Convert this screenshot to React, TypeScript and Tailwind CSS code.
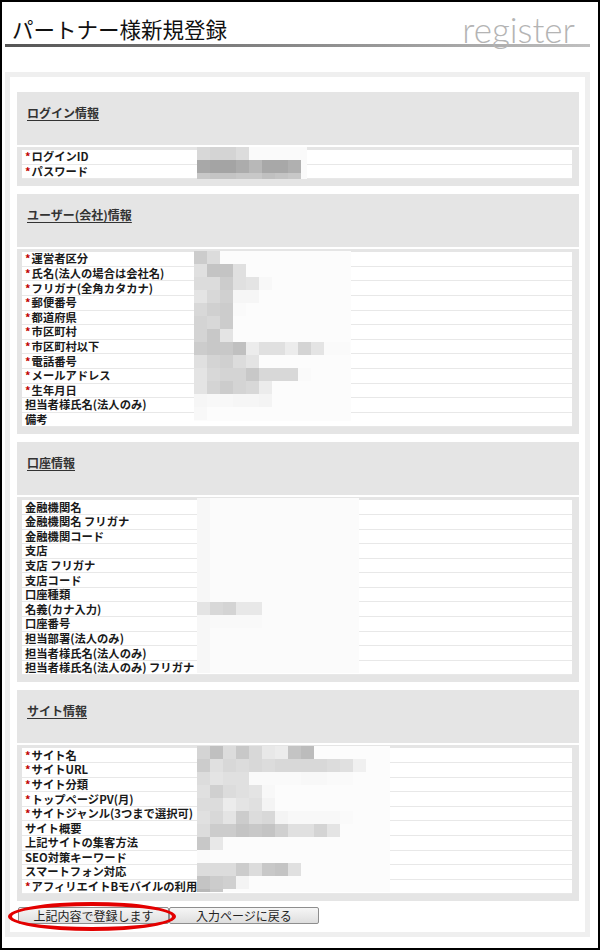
import React from 'react';

type Row = [string, boolean];

type Mosaic = {
  left: number;
  top: number;
  width: number;
  height: number;
  fill: string;
  rows: string[];
};

type Section = {
  title: string;
  rows: Row[];
  mosaic: Mosaic;
};

const sections: Section[] = [
  {
    title: 'ログイン情報',
    rows: [
      ['ログインID', true],
      ['パスワード', true],
    ],
    mosaic: {
      left: 180,
      top: 0,
      width: 110,
      height: 32,
      fill: 'fa',
      rows: ['d8 d4 d4 dc', 'a8 a4 a4 ac b8 a8 a8 b0', 'c8 c4 c4 c8 c8 c0 c4 c8'],
    },
  },
  {
    title: 'ユーザー(会社)情報',
    rows: [
      ['運営者区分', true],
      ['氏名(法人の場合は会社名)', true],
      ['フリガナ(全角カタカナ)', true],
      ['郵便番号', true],
      ['都道府県', true],
      ['市区町村', true],
      ['市区町村以下', true],
      ['電話番号', true],
      ['メールアドレス', true],
      ['生年月日', true],
      ['担当者様氏名(法人のみ)', false],
      ['備考', false],
    ],
    mosaic: {
      left: 177,
      top: 2,
      width: 157,
      height: 170,
      fill: 'fc',
      rows: [
        'cc dc',
        'e0 c4 c4 e0',
        'dc dc cc e0 e4 f8',
        'e4 d8 d0 f6 f6',
        'd8 d0 cc fa',
        'd4 d8 cc',
        'd4 c8 e4',
        'cc c8 c8 c0 ec e0 e0 ec d4 e4 fa fa',
        'e0 d4 d0 dc e4',
        'e4 d8 d4 d4 c8 d8 d8 d8 fa',
        'e4 d4 cc d4 d8 ec',
        'f6 f8 f8 f6 f6 f4',
        'f8',
      ],
    },
  },
  {
    title: '口座情報',
    rows: [
      ['金融機関名', false],
      ['金融機関名 フリガナ', false],
      ['金融機関コード', false],
      ['支店', false],
      ['支店 フリガナ', false],
      ['支店コード', false],
      ['口座種類', false],
      ['名義(カナ入力)', false],
      ['口座番号', false],
      ['担当部署(法人のみ)', false],
      ['担当者様氏名(法人のみ)', false],
      ['担当者様氏名(法人のみ) フリガナ', false],
    ],
    mosaic: {
      left: 180,
      top: 1,
      width: 162,
      height: 175,
      fill: 'fb',
      rows: [
        'f7', 'f7', 'f7', 'f7', 'f7', 'f7', 'f7', 'f7',
        'e4 d8 d4 e8 e8', 'f7 f9 f9 f9 f9', 'f7', 'f7', 'f7', 'f7',
      ],
    },
  },
  {
    title: 'サイト情報',
    rows: [
      ['サイト名', true],
      ['サイトURL', true],
      ['サイト分類', true],
      ['トップページPV(月)', true],
      ['サイトジャンル(3つまで選択可)', true],
      ['サイト概要', false],
      ['上記サイトの集客方法', false],
      ['SEO対策キーワード', false],
      ['スマートフォン対応', false],
      ['アフィリエイトBモバイルの利用', true],
    ],
    mosaic: {
      left: 180,
      top: 1,
      width: 193,
      height: 146,
      fill: 'fc',
      rows: [
        'd4 c0 dc c8 d8 e8 ec c4 bc',
        'cc e0 d8 dc d8 dc d8 d8 d8 d8 dc e0 f0',
        'dc e4 e0 e0 fa fa fa fa f8 f8 fa fa',
        'e0 d0 dc e0 e4 f8',
        'dc dc ec e4 e0 f4',
        'e0 d8 e4 cc dc d8 f4 f8 f8 f8 f8 fa',
        'dc cc cc c4 c8 c4 d0 e0 e0 d4 e4',
        'c8 e8',
        'fa',
        'dc dc dc cc dc c8 c4 e0',
        'c4 cc d0 f4',
        'b8 c8',
      ],
    },
  },
];

// two-digit grey level -> css colour
const grey = (v: string) => `#${v}${v}${v}`;

function MosaicBlock({ m }: { m: Mosaic }) {
  const cols = Math.ceil(m.width / 13);
  return (
    <div
      className="absolute overflow-hidden flex flex-col"
      style={{ left: m.left, top: m.top, width: m.width, height: m.height, backgroundColor: grey(m.fill) }}
    >
      {m.rows.map((r, i) => {
        const cells = r.split(' ');
        return (
          <div key={i} className="flex h-[13px] shrink-0">
            {Array.from({ length: cols }).map((_, j) => (
              <div
                key={j}
                className="w-[13px] h-[13px] shrink-0"
                style={{ backgroundColor: grey(cells[j] ?? m.fill) }}
              />
            ))}
          </div>
        );
      })}
    </div>
  );
}

function FormSection({ s, first }: { s: Section; first: boolean }) {
  return (
    <div className={first ? '' : 'mt-[8px]'}>
      <div className="h-[53px] bg-[#e5e5e5] pl-[10px] pt-[7px]">
        <span className="text-[12px] leading-[16px] font-bold text-[#333] underline underline-offset-2">
          {s.title}
        </span>
      </div>
      <div className="mt-[2px] bg-[#e5e5e5] pt-[3px] pl-[5px] pr-[7px] pb-[7px] relative">
        <div className="flex flex-col">
          {s.rows.map(([label, req]) => (
            <div
              key={label}
              className="h-[14.6px] bg-white border-b-[1.5px] border-[#e8e8e8] flex items-center"
            >
              <div className="w-[175px] pl-[3px] text-[11.3px] leading-[13px] font-bold text-[#1a1a1a] whitespace-nowrap">
                {req && <span className="text-[#c00000] text-[11px] mr-[1px]">*</span>}
                {label}
              </div>
              <div className="flex-1" />
            </div>
          ))}
        </div>
        <MosaicBlock m={s.mosaic} />
      </div>
    </div>
  );
}

export default function App() {
  return (
    <div
      className="w-[600px] h-[950px] border-2 border-black bg-white"
      style={{ fontFamily: '"Noto Sans CJK JP", "Liberation Sans", sans-serif' }}
    >
      <div className="ml-[3px] w-[585px]">
        {/* page title */}
        <div className="relative">
          <div className="h-[42px] pl-[7px] pt-[15px] text-[21.5px] leading-[24px] text-[#111]">
            パートナー様新規登録
          </div>
          <div className="h-[3px] bg-gradient-to-r from-[#555] via-[#8a8a8a] to-[#c0c0c0]" />
          <span
            className="absolute right-[15px] top-[10px] text-[35px] leading-none font-light text-[#b4b4b4]"
            style={{ fontFamily: 'Lato, "Open Sans", sans-serif' }}
          >
            register
          </span>
        </div>

        {/* form panel */}
        <div className="mt-[25px] border-[5px] border-[#efefef] pl-[7px] pr-[6px] pt-[15px] pb-[8px]">
          {sections.map((s, i) => (
            <FormSection key={s.title} s={s} first={i === 0} />
          ))}

          <div className="relative mt-[6px] flex">
            <button className="ml-[1px] w-[151px] h-[17px] border border-[#8e8e8e] rounded-[2px] bg-gradient-to-b from-[#f6f6f6] to-[#dedede] text-[12px] leading-[15px] text-[#222]">
              上記内容で登録します
            </button>
            <button className="w-[150px] h-[17px] border border-[#8e8e8e] rounded-[2px] bg-gradient-to-b from-[#f6f6f6] to-[#dedede] text-[12px] leading-[15px] text-[#222]">
              入力ページに戻る
            </button>
            <div className="absolute left-[-9px] top-[-5px] w-[168px] h-[29px] rounded-[50%] border-[4px] border-[#e30000]" />
          </div>
        </div>
      </div>
    </div>
  );
}
